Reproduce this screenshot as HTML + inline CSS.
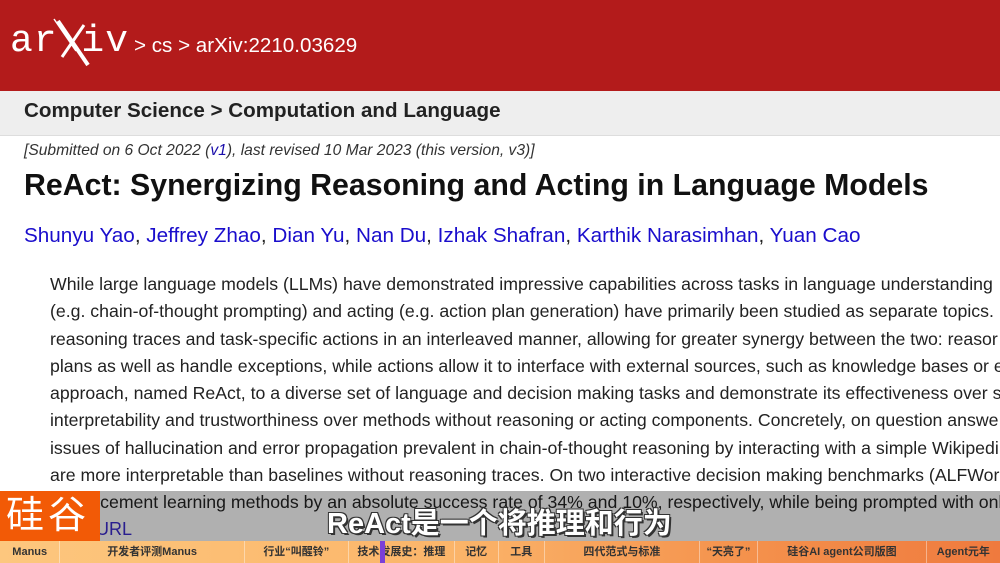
<!DOCTYPE html>
<html><head><meta charset="utf-8"><style>
body{margin:0;width:1000px;height:563px;overflow:hidden;background:#fff;font-family:"Liberation Sans","Noto Sans CJK SC",sans-serif;position:relative}
.hdr{position:absolute;left:0;top:0;width:1000px;height:91px;background:#b31b1b}
.crumb{position:absolute;left:0;top:91px;width:1000px;height:44px;background:#eeeeee;border-bottom:1px solid #ddd}
.t{position:absolute;white-space:nowrap}
.abs{position:absolute;left:50px;font-size:17.7px;color:#222;white-space:nowrap;line-height:27.3px;top:271px}
.band{position:absolute;left:0;top:491px;width:1000px;height:50px;background:#b0b0b0;mix-blend-mode:multiply}
.bar{position:absolute;left:0;top:541px;width:1000px;height:22px;background:linear-gradient(90deg,#fdc77e,#fbb56a 45%,#f4914c 75%,#ef7a3e);display:flex;font-size:11px;font-weight:bold;color:#333}
.bar div{border-right:1px solid #fff6;text-align:center;line-height:22px}
</style></head><body>
<div class="hdr"></div>
<div class="t" style="left:10px;top:20px;font-family:'Liberation Mono',monospace;font-size:38px;color:#fff;letter-spacing:1px">ar<span style="opacity:0">X</span>iv</div>
<svg style="position:absolute;left:50px;top:15px" width="45" height="55"><path d="M8 6 L38 50" stroke="#fff" stroke-width="4"/><path d="M34 10 L12 42" stroke="#fff" stroke-width="3"/><path d="M4 4 L26 36" stroke="#fff" stroke-width="1.5" fill="none"/></svg>
<div class="t" style="left:134px;top:34px;font-size:20.6px;color:#fff">&gt; cs &gt; arXiv:2210.03629</div>
<div class="crumb"></div>
<div class="t" style="left:24px;top:99px;font-size:20.6px;font-weight:bold;color:#222">Computer Science &gt; Computation and Language</div>
<div class="t" style="left:24px;top:142px;font-size:15.6px;font-style:italic;color:#333">[Submitted on 6 Oct 2022 (<span style="color:#1a0dab">v1</span>), last revised 10 Mar 2023 (this version, v3)]</div>
<div class="t" style="left:24px;top:169px;font-size:30.3px;font-weight:bold;color:#111">ReAct: Synergizing Reasoning and Acting in Language Models</div>
<div class="t" style="left:24px;top:224px;font-size:20.7px;color:#1a0dcc">Shunyu Yao<span style="color:#222">,</span> Jeffrey Zhao<span style="color:#222">,</span> Dian Yu<span style="color:#222">,</span> Nan Du<span style="color:#222">,</span> Izhak Shafran<span style="color:#222">,</span> Karthik Narasimhan<span style="color:#222">,</span> Yuan Cao</div>
<div class="abs">While large language models (LLMs) have demonstrated impressive capabilities across tasks in language understanding<br>(e.g. chain-of-thought prompting) and acting (e.g. action plan generation) have primarily been studied as separate topics.<br>reasoning traces and task-specific actions in an interleaved manner, allowing for greater synergy between the two: reasor<br>plans as well as handle exceptions, while actions allow it to interface with external sources, such as knowledge bases or e<br>approach, named ReAct, to a diverse set of language and decision making tasks and demonstrate its effectiveness over s<br>interpretability and trustworthiness over methods without reasoning or acting components. Concretely, on question answe<br>issues of hallucination and error propagation prevalent in chain-of-thought reasoning by interacting with a simple Wikipedi<br>are more interpretable than baselines without reasoning traces. On two interactive decision making benchmarks (ALFWor<br>reinforcement learning methods by an absolute success rate of 34% and 10%, respectively, while being prompted with onl</div>
<div class="t" style="left:96px;top:519px;font-size:18px;color:#3b2bd0">URL</div>
<div class="band"></div>
<div style="position:absolute;left:0;top:491px;width:100px;height:50px;background:#f25a06"></div>
<div class="t" style="left:6px;top:494px;font-size:38px;color:#fff;line-height:44px;letter-spacing:4px">硅谷</div>
<div class="t" style="left:327px;top:500px;font-size:29px;color:#fff;font-weight:bold;text-shadow:2px 2px 0 #333,-1px -1px 0 #333,1px -1px 0 #333,-1px 1px 0 #333">ReAct是一个将推理和行为</div>
<div class="bar">
<div style="width:60px">Manus</div>
<div style="width:185px">开发者评测Manus</div>
<div style="width:104px">行业“叫醒铃”</div>
<div style="width:106px">技术发展史：推理</div>
<div style="width:43px">记忆</div>
<div style="width:46px">工具</div>
<div style="width:155px">四代范式与标准</div>
<div style="width:58px">“天亮了”</div>
<div style="width:169px">硅谷AI agent公司版图</div>
<div style="width:74px;border:none">Agent元年</div>
</div>
<div style="position:absolute;left:380px;top:541px;width:5px;height:22px;background:#7a3fd8"></div>
</body></html>
